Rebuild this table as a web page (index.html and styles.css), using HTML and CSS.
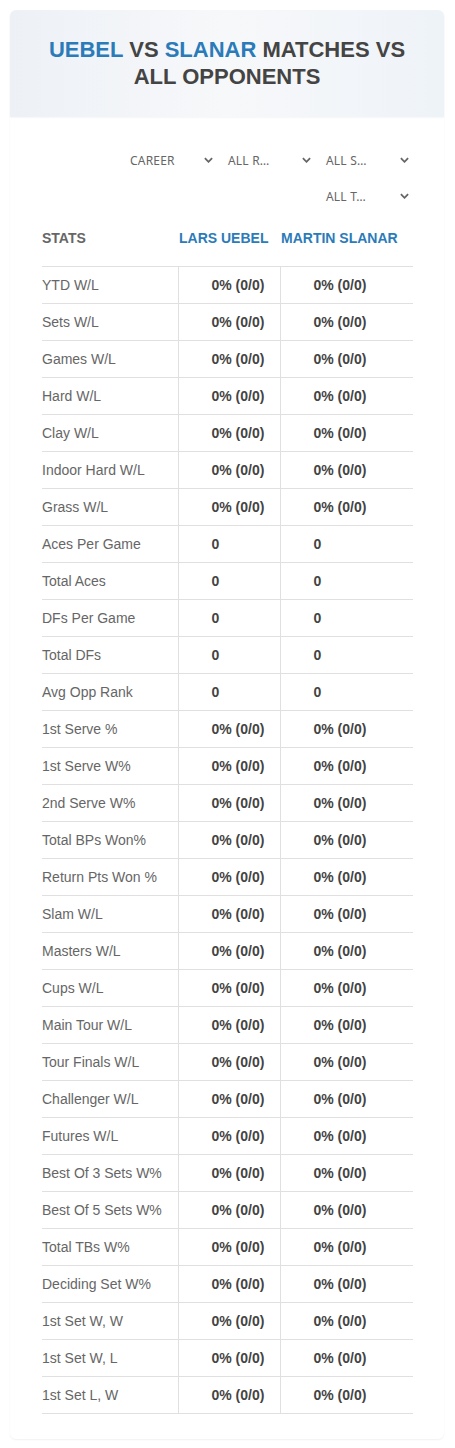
FILE: index.html
```html
<!DOCTYPE html>
<html lang="en">
<head>
  <meta charset="UTF-8">
  <meta name="viewport" content="width=device-width, initial-scale=1.0">
  <title>Uebel vs Slanar Matches vs All Opponents</title>
  <link rel="stylesheet" href="styles.css">
</head>
<body>
  <div class="card">
    <header class="title-box">
      <h1><span class="blue">Uebel</span> vs <span class="blue">Slanar</span> matches vs all opponents</h1>
    </header>

    <div class="content">
      <div class="filters">
        <div class="select"><span>CAREER</span><svg viewBox="0 0 10 6"><polyline points="1,1 5,5 9,1"/></svg></div>
        <div class="select"><span>ALL R…</span><svg viewBox="0 0 10 6"><polyline points="1,1 5,5 9,1"/></svg></div>
        <div class="select"><span>ALL S…</span><svg viewBox="0 0 10 6"><polyline points="1,1 5,5 9,1"/></svg></div>
        <div class="select"><span>ALL T…</span><svg viewBox="0 0 10 6"><polyline points="1,1 5,5 9,1"/></svg></div>
      </div>

      <table class="stats">
        <colgroup>
          <col class="c-label">
          <col class="c-p1">
          <col class="c-p2">
        </colgroup>
        <thead>
          <tr>
            <th>STATS</th>
            <th class="player">LARS UEBEL</th>
            <th class="player">MARTIN SLANAR</th>
          </tr>
        </thead>
        <tbody id="rows"></tbody>
      </table>
    </div>
  </div>

  <script>
    const pct = '0% (0/0)';
    const stats = [
      ['YTD W/L', pct], ['Sets W/L', pct], ['Games W/L', pct], ['Hard W/L', pct],
      ['Clay W/L', pct], ['Indoor Hard W/L', pct], ['Grass W/L', pct],
      ['Aces Per Game', '0'], ['Total Aces', '0'], ['DFs Per Game', '0'],
      ['Total DFs', '0'], ['Avg Opp Rank', '0'],
      ['1st Serve %', pct], ['1st Serve W%', pct], ['2nd Serve W%', pct],
      ['Total BPs Won%', pct], ['Return Pts Won %', pct], ['Slam W/L', pct],
      ['Masters W/L', pct], ['Cups W/L', pct], ['Main Tour W/L', pct],
      ['Tour Finals W/L', pct], ['Challenger W/L', pct], ['Futures W/L', pct],
      ['Best Of 3 Sets W%', pct], ['Best Of 5 Sets W%', pct], ['Total TBs W%', pct],
      ['Deciding Set W%', pct], ['1st Set W, W', pct], ['1st Set W, L', pct],
      ['1st Set L, W', pct]
    ];

    const tbody = document.getElementById('rows');
    stats.forEach(function (s) {
      const tr = document.createElement('tr');
      tr.innerHTML = '<td class="label">' + s[0] + '</td><td class="val">' + s[1] + '</td><td class="val">' + s[1] + '</td>';
      tbody.appendChild(tr);
    });
  </script>
</body>
</html>
```

FILE: styles.css
```css
body {
  margin: 0;
  padding: 10px 11px 10px 10px;
  font-family: "Liberation Sans", Arial, sans-serif;
  background: #fff;
  color: #444;
}
.card {
  background: #fff;
  border-radius: 6px;
  box-shadow: 0 1px 2px rgba(0,0,0,0.06);
}
.title-box {
  background: linear-gradient(90deg, #edf1f6 0%, #f7f8fa 50%, #eef3f8 100%);
  border-radius: 6px 6px 0 0;
  box-shadow: 0 1px 2px rgba(0,0,0,0.04);
  padding: 26px 34px 27px;
  text-align: center;
}
.title-box h1 {
  margin: 0;
  font-size: 22px;
  line-height: 27px;
  font-weight: bold;
  text-transform: uppercase;
  color: #444;
}
.blue {
  color: #2b7bb9;
}
.content {
  padding: 29px 31px 25px 32px;
}
.filters {
  display: flex;
  flex-wrap: wrap;
  justify-content: flex-end;
  gap: 8px 8px;
  margin-bottom: 12px;
}
.select {
  width: 90px;
  height: 28px;
  box-sizing: border-box;
  padding: 0 4px 0 3px;
  display: flex;
  align-items: center;
  justify-content: space-between;
  font-family: "Noto Sans", sans-serif;
  font-size: 12px;
  letter-spacing: 0.2px;
  color: #666;
}
.select svg {
  width: 9px;
  height: 6px;
  fill: none;
  stroke: #666;
  stroke-width: 2;
}
.stats {
  width: 100%;
  border-collapse: collapse;
  table-layout: fixed;
  font-size: 14px;
}
.c-label { width: 136px; }
.c-p1 { width: 102px; }
.c-p2 { width: 133px; }
.stats th {
  text-align: left;
  font-weight: bold;
  color: #666;
  line-height: 16px;
  padding: 8px 0 20px;
  border-bottom: 1px solid #e0e0e0;
  white-space: nowrap;
}
.stats th.player {
  color: #2b7bb9;
  padding-left: 1px;
}
.stats td {
  line-height: 16px;
  padding: 10px 0;
  border-bottom: 1px solid #e0e0e0;
}
.stats td.label {
  color: #666;
}
.stats td.val {
  border-left: 1px solid #e0e0e0;
  padding-left: 33px;
  font-weight: bold;
  color: #444;
}
```
